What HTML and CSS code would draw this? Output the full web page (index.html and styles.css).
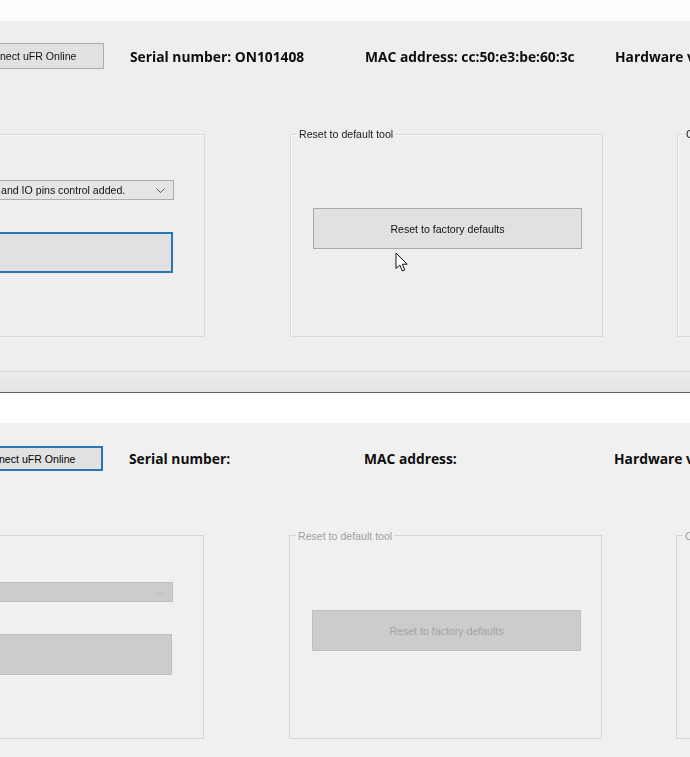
FILE: index.html
```html
<!DOCTYPE html>
<html lang="en">
<head>
<meta charset="utf-8">
<title>uFR Online configuration</title>
<link rel="stylesheet" href="styles.css">
</head>
<body>
<div class="strip"></div>
<section class="window window--live">
  <div class="content">
    <div class="header">
      <button class="btn btn-connect">Connect uFR Online</button>
      <span class="info info-serial">Serial number: ON101408</span>
      <span class="info info-mac">MAC address: cc:50:e3:be:60:3c</span>
      <span class="info info-hw">Hardware version:</span>
    </div>
    <div class="groups">
      <div class="group group-left">
        <div class="combo">
          <span class="combo-text">and IO pins control added.</span>
          <svg class="chevron" width="9" height="5" viewBox="0 0 9 5"><path d="M0.5 0.5 L4.5 4.5 L8.5 0.5" fill="none" stroke="currentColor" stroke-width="1"/></svg>
        </div>
        <button class="btn btn-wide btn-focus"></button>
      </div>
      <div class="group group-mid">
        <span class="group-title">Reset to default tool</span>
        <button class="btn btn-reset">Reset to factory defaults</button>
        <svg class="cursor" width="14" height="21" viewBox="0 0 14 21"><path d="M1 1 L1 16.5 L4.8 13 L7.4 19 L9.8 18 L7.3 12.2 L12.2 12.2 Z" fill="#fff" stroke="#111" stroke-width="1" stroke-linejoin="round"/></svg>
      </div>
      <div class="group group-right">
        <span class="group-title">C</span>
      </div>
    </div>
  </div>
  <div class="footer"></div>
</section>
<div class="gap"></div>
<section class="window window--idle">
  <div class="content">
    <div class="header">
      <button class="btn btn-connect btn-focus">Connect uFR Online</button>
      <span class="info info-serial">Serial number:</span>
      <span class="info info-mac">MAC address:</span>
      <span class="info info-hw">Hardware version:</span>
    </div>
    <div class="groups">
      <div class="group group-left">
        <div class="combo combo-disabled">
          <span class="combo-text"></span>
          <svg class="chevron" width="9" height="5" viewBox="0 0 9 5"><path d="M0.5 0.5 L4.5 4.5 L8.5 0.5" fill="none" stroke="currentColor" stroke-width="1"/></svg>
        </div>
        <button class="btn btn-wide btn-disabled" disabled></button>
      </div>
      <div class="group group-mid">
        <span class="group-title">Reset to default tool</span>
        <button class="btn btn-reset btn-disabled" disabled>Reset to factory defaults</button>
      </div>
      <div class="group group-right">
        <span class="group-title">C</span>
      </div>
    </div>
  </div>
</section>
</body>
</html>
```

FILE: styles.css
```css
* { box-sizing: border-box; }

html, body {
  margin: 0;
  padding: 0;
}

body {
  width: 690px;
  height: 757px;
  overflow: hidden;
  background: #fdfefe;
  font-family: "Liberation Sans", Arial, sans-serif;
  font-size: 10.6px;
  color: #111;
}

.strip {
  height: 21px;
  background: #fcfdfd;
}

.gap {
  height: 30px;
  background: #ffffff;
}

.window {
  overflow: hidden;
}

.window--live {
  height: 372px;
  background: #eeeeee;
  display: flex;
  flex-direction: column;
  filter: blur(0.3px);
}

.window--idle {
  height: 334px;
  background: #f0f0f0;
}

.content {
  display: flex;
  flex-direction: column;
}

.window--idle .content {
  margin-left: -1px;
}

/* header row */
.header {
  display: flex;
  align-items: center;
  padding-top: 22px;
  white-space: nowrap;
}

.window--idle .header {
  padding-top: 23px;
}

.btn {
  font-family: "Liberation Sans", Arial, sans-serif;
  font-size: 10.6px;
  color: #111;
  background: #e1e1e1;
  border: 1px solid #adadad;
  border-radius: 0;
  padding: 0;
  margin: 0;
  flex: none;
}

.btn-connect {
  width: 151px;
  height: 26px;
  margin-left: -47px;
}

.window--idle .btn-connect {
  height: 25px;
  color: #000;
}

.btn-focus {
  border: 2px solid #2b74b8;
}

.btn-disabled {
  background: #cccccc;
  border: 1px solid #bfbfbf;
  color: #a3a3a3;
}

.info {
  font-family: "Open Sans", "Noto Sans", sans-serif;
  font-weight: 700;
  font-size: 13.8px;
  color: #0d0d0d;
  flex: none;
}

.info-serial {
  margin-left: 26px;
  width: 235px;
}

.info-mac {
  width: 250px;
}

/* groups */
.groups {
  display: flex;
  margin-top: 65px;
}

.window--idle .groups {
  margin-top: 64px;
}

.group {
  position: relative;
  height: 203px;
  border: 1px solid #d9d9d9;
  box-shadow: inset 1px 1px 0 #f8f8f8;
  flex: none;
  display: flex;
  flex-direction: column;
  align-items: flex-start;
}

.window--idle .group {
  height: 204px;
  padding-top: 1px;
  border-color: #d6d6d6;
  box-shadow: none;
}

.group-left {
  margin-left: -10px;
  width: 215px;
}

.group-mid {
  margin-left: 85px;
  width: 313px;
}

.group-right {
  margin-left: 74px;
  width: 200px;
}

.group-title {
  display: block;
  margin: -8px 0 0 6px;
  padding: 0 2px;
  line-height: 14px;
  height: 14px;
  background: #eeeeee;
  color: #1a1a1a;
  white-space: nowrap;
}

.window--idle .group-title {
  background: #f0f0f0;
  color: #a0a0a0;
}

/* combo */
.combo {
  margin: 45px 0 0 6px;
  width: 177px;
  height: 20px;
  background: #e5e5e5;
  border: 1px solid #adadad;
  display: flex;
  align-items: center;
  justify-content: space-between;
  padding: 0 8px 0 3px;
  color: #5a5a5a;
}

.combo-text {
  color: #111;
  white-space: nowrap;
}

.combo-disabled {
  background: #cccccc;
  border-color: #bfbfbf;
  color: #b8b8b8;
}

.chevron {
  display: block;
  flex: none;
}

.btn-wide {
  margin: 32px 0 0 6px;
  width: 176px;
  height: 41px;
}

.btn-reset {
  margin: 67px 0 0 22px;
  width: 269px;
  height: 41px;
  border-color: #a9a9a9;
}

.btn-reset.btn-disabled {
  border-color: #bfbfbf;
}

.cursor {
  position: absolute;
  left: 104px;
  top: 117px;
}

/* footer of the live window */
.footer {
  margin-top: auto;
  height: 22px;
  border-top: 1px solid #d8d8d8;
  border-bottom: 1px solid #5d6369;
  background: linear-gradient(#ececec, #e4e4e4);
}
```
